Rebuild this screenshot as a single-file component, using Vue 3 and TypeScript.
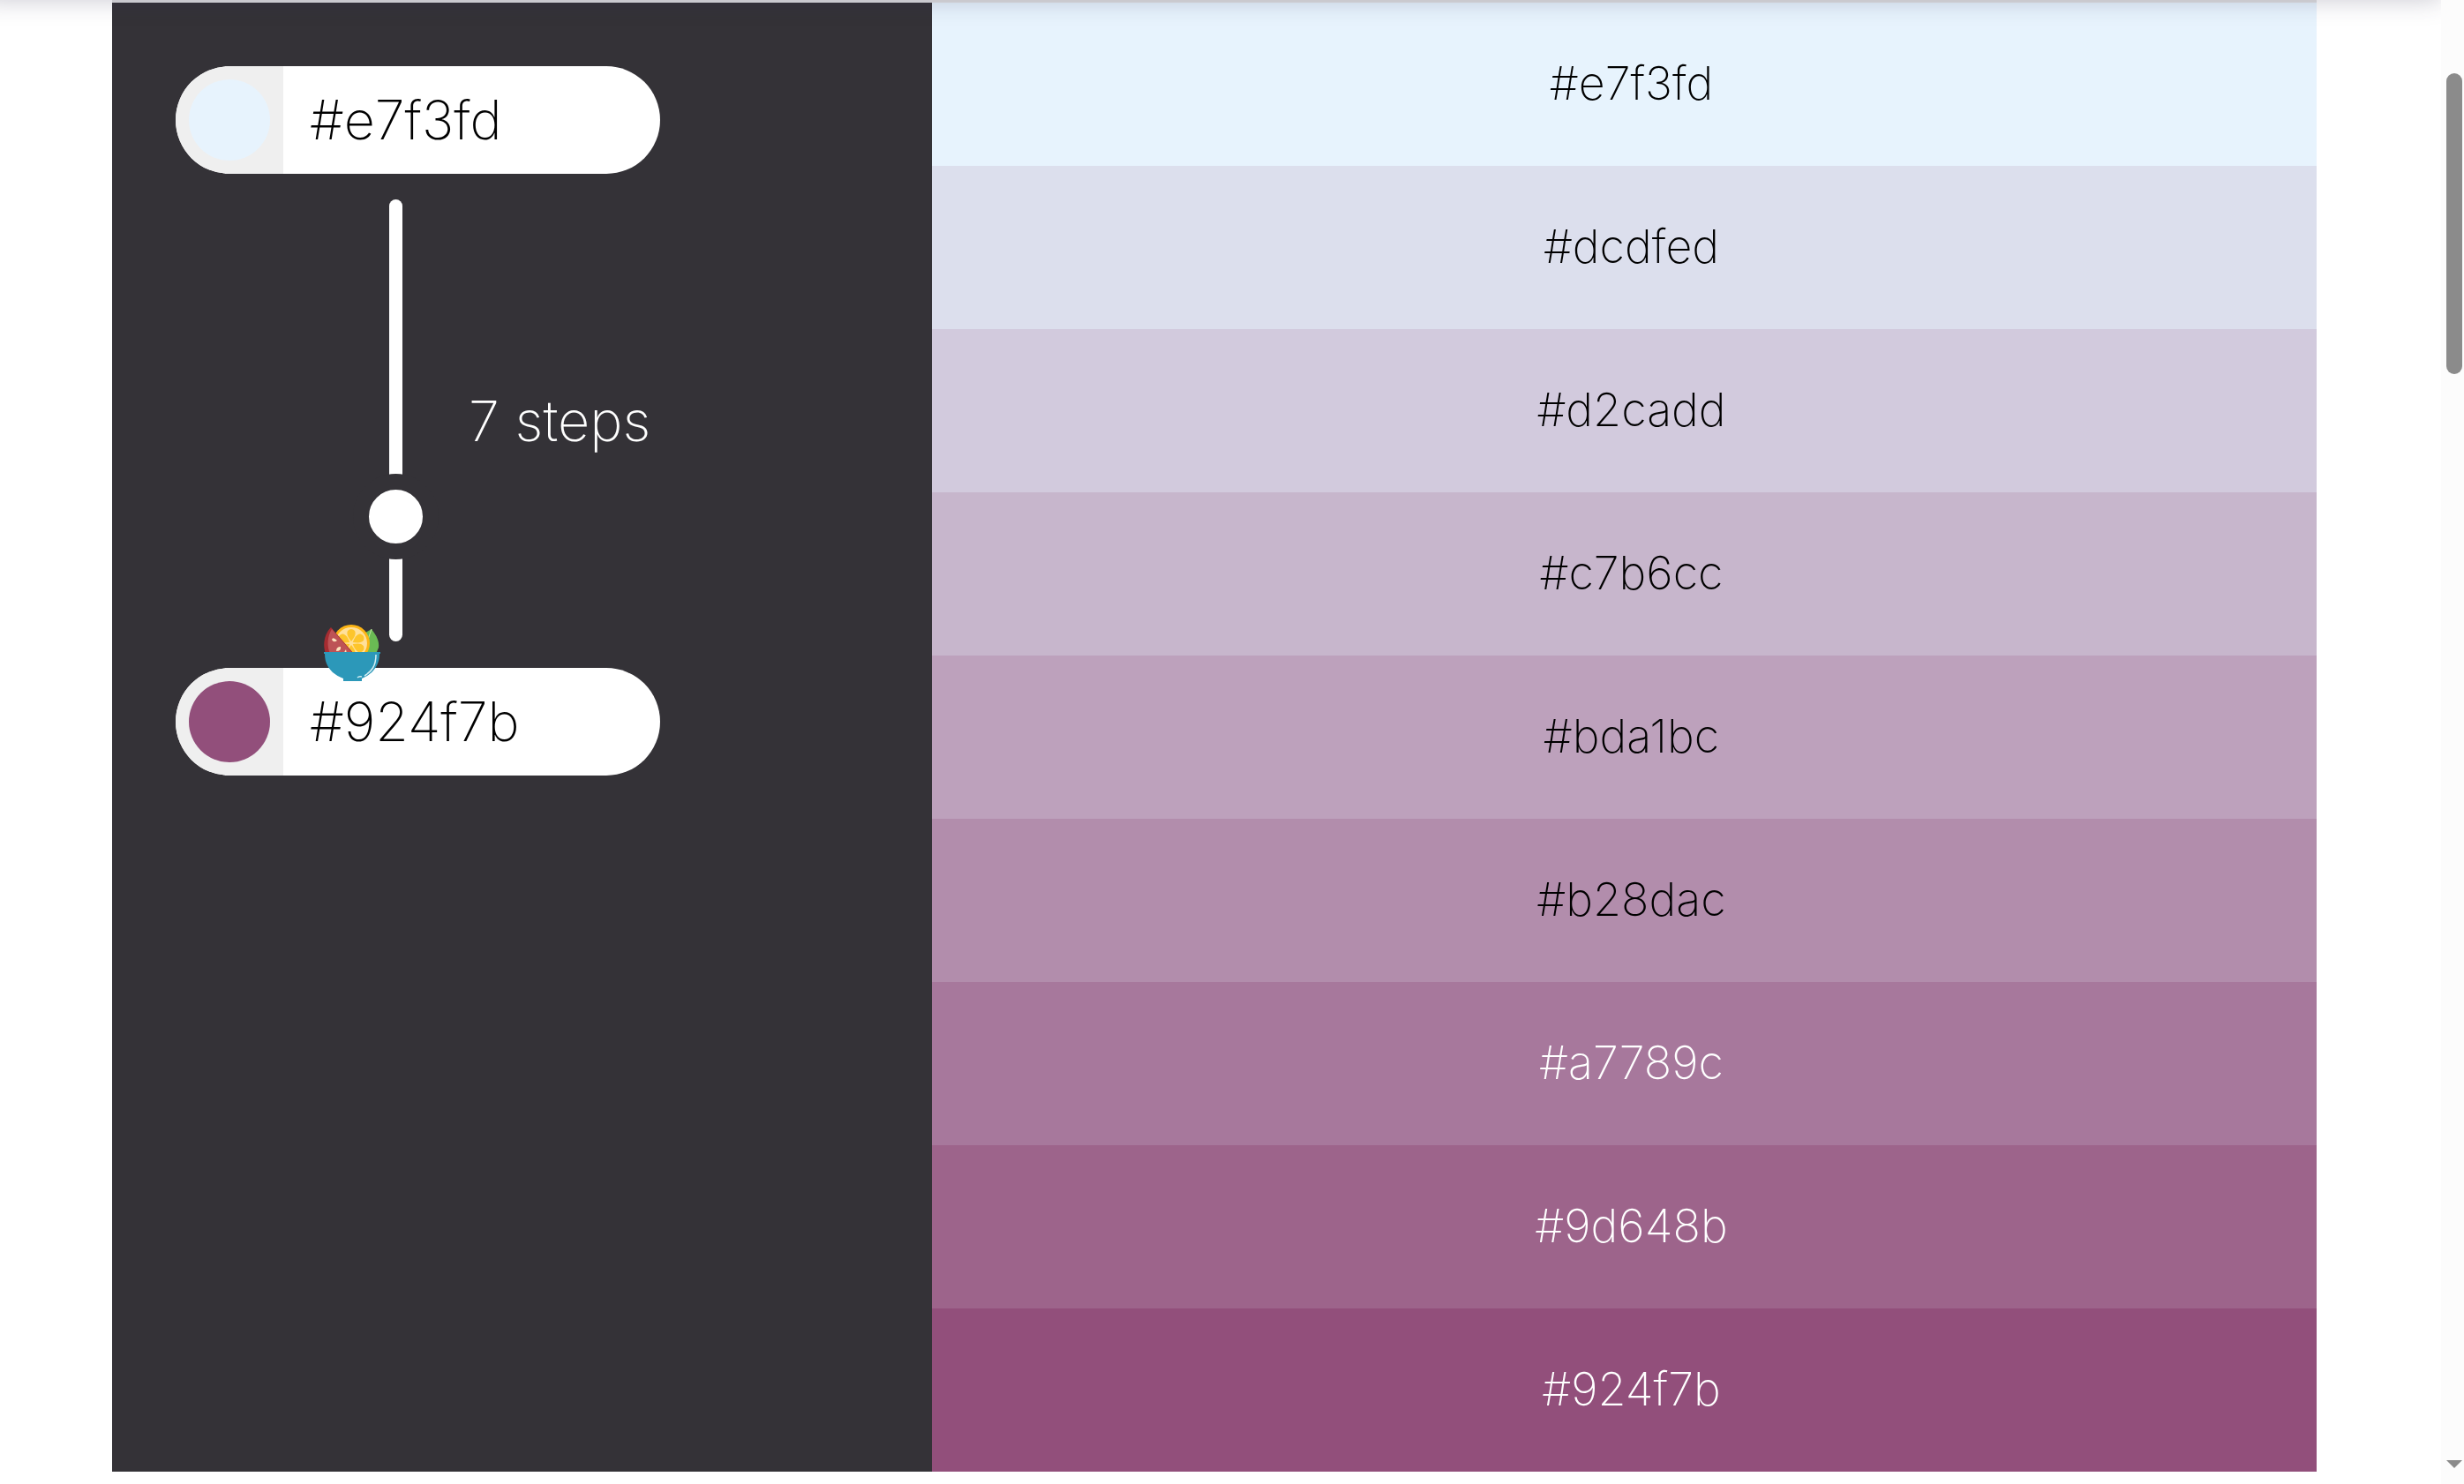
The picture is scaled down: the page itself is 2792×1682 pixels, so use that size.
<script setup lang="ts">
import { computed, ref } from 'vue'

const start = ref('#e7f3fd')
const end = ref('#924f7b')
const steps = ref(7)

function channels(hex: string): number[] {
  return [1, 3, 5].map((i) => parseInt(hex.slice(i, i + 2), 16))
}

const valid = (hex: string) => /^#[0-9a-f]{6}$/i.test(hex)

const shades = computed(() => {
  if (!valid(start.value) || !valid(end.value)) return []
  const a = channels(start.value)
  const b = channels(end.value)
  const count = Number(steps.value) + 1
  return Array.from({ length: count + 1 }, (_, i) => {
    const rgb = a.map((v, c) => Math.round(v + ((b[c] - v) * i) / count))
    const luma = (rgb[0] * 299 + rgb[1] * 587 + rgb[2] * 114) / 1000
    return {
      hex: '#' + rgb.map((v) => v.toString(16).padStart(2, '0')).join(''),
      light: luma < 145,
    }
  })
})
</script>

<template>
  <div class="window">
    <div class="page">
      <main class="mixer">
        <section class="controls">
          <div class="field">
            <input v-model="start" class="swatch" type="color" aria-label="Start color" />
            <input v-model="start" class="hex" type="text" aria-label="Start color hex" />
          </div>
          <div class="stepper">
            <input id="steps" v-model="steps" class="slider" type="range" min="1" max="27" />
            <label for="steps" class="count">{{ steps }} steps</label>
          </div>
          <div class="field">
            <input v-model="end" class="swatch" type="color" aria-label="End color" />
            <input v-model="end" class="hex" type="text" aria-label="End color hex" />
            <svg class="bowl" viewBox="0 0 64 64" aria-hidden="true">
              <path d="M54 5c6 8 9 14 8 21l-3 7H42V12z" fill="#6abb54" />
              <path d="M54 5c-3 8-5 15-7 25" fill="none" stroke="#c6e5a5" stroke-width="1" />
              <circle cx="31" cy="21" r="21" fill="#fdb515" />
              <circle cx="31" cy="21" r="18" fill="#ffe09a" />
              <g fill="#fdc52c">
                <path v-for="a in 6" :key="a" d="M31 19C28 15 25 11 27 7q4-4 8 0c2 4-1 8-4 12z" :transform="`rotate(${a * 60} 31 21)`" />
              </g>
              <path d="M8 3C1 10-2 22 2 33h32z" fill="#a52c31" />
              <path d="M9 5C4 13 3 24 7 33h26z" fill="#bd5356" />
              <g fill="#fce3bd">
                <path d="M9 17q1-4 6 1-4 3-6-1zM14 30q0-5 5-5 1 5-5 5zM22 33l3-5 1 5z" />
              </g>
              <path d="M0 31h64v2h-1C63 47 55 56 43 61v3H22v-3C9 56 1 47 1 33H0z" fill="#2c98b9" />
              <path d="M59 34c0 13-5 19-13 24M43 59q-3-1-5 1" fill="none" stroke="#d5eef3" stroke-width="1.5" />
            </svg>
          </div>
        </section>
        <ol class="shades">
          <li
            v-for="shade in shades"
            :key="shade.hex"
            :class="['shade', { light: shade.light }]"
            :style="{ backgroundColor: shade.hex }"
          >
            {{ shade.hex }}
          </li>
        </ol>
      </main>
      <div class="header-shadow"></div>
    </div>
    <div class="scrollbar" aria-hidden="true">
      <div class="thumb"></div>
      <div class="arrow"></div>
    </div>
  </div>
</template>

<style>
body {
  margin: 0;
  background: #fff;
}
</style>

<style scoped>
.window {
  display: flex;
  min-height: 100vh;
  overflow: hidden;
  font-family: Inter, 'Liberation Sans', sans-serif;
  font-weight: 200;
}

.page {
  position: relative;
  flex: 1;
  overflow: hidden;
  padding: 0 141px 0 127px;
}

.mixer {
  display: grid;
  grid-template-columns: 929fr 1569fr;
  border-top: 3px solid #e0e0e1;
}

.controls {
  display: flex;
  flex-direction: column;
  align-items: flex-start;
  padding: 72px;
  background: #343237;
}

.field {
  position: relative;
  display: flex;
  width: 549px;
  height: 122px;
  border-radius: 61px;
  background: #fff;
}

.swatch {
  appearance: none;
  box-sizing: border-box;
  width: 122px;
  height: 122px;
  margin: 0;
  padding: 15px;
  border: 0;
  border-radius: 61px 0 0 61px;
  background: #efefef;
}

.swatch::-webkit-color-swatch-wrapper {
  padding: 0;
}

.swatch::-webkit-color-swatch {
  border: 0;
  border-radius: 50%;
}

.hex {
  flex: 1;
  min-width: 0;
  padding: 0 30px;
  border: 0;
  border-radius: 0 61px 61px 0;
  background: none;
  color: #000;
  font: inherit;
  font-size: 61px;
}

.stepper {
  display: flex;
  align-items: center;
  width: 100%;
  height: 501px;
  margin: 29px 0 30px;
}

.slider {
  appearance: none;
  writing-mode: vertical-lr;
  direction: rtl;
  width: 97px;
  height: 501px;
  margin: 0 0 0 201px;
  background: none;
}

.slider::-webkit-slider-runnable-track {
  width: 15px;
  height: 100%;
  border-radius: 8px;
  background: #fff;
}

.slider::-webkit-slider-thumb {
  appearance: none;
  box-sizing: border-box;
  width: 97px;
  height: 97px;
  margin-left: -41px;
  border: 18px solid #343237;
  border-radius: 50%;
  background: #fff;
}

.count {
  margin: 0 0 0 34px;
  color: #fff;
  font-size: 63px;
}

.bowl {
  position: absolute;
  top: -49px;
  left: 168px;
  width: 64px;
  height: 64px;
}

.shades {
  margin: 0;
  padding: 0;
  list-style: none;
}

.shade {
  height: 185px;
  padding-left: 16px;
  color: #000;
  font-size: 52px;
  line-height: 184px;
  text-align: center;
}

.shade.light {
  color: #fff;
}

.header-shadow {
  position: absolute;
  top: -40px;
  left: -20px;
  right: 0;
  height: 40px;
  box-shadow: 0 0 28px rgba(50, 45, 80, 0.26);
}

.scrollbar {
  display: flex;
  flex-direction: column;
  justify-content: space-between;
  align-items: center;
  box-sizing: border-box;
  width: 26px;
  padding: 83px 0 18px 4px;
  background: #fcfcfc;
}

.thumb {
  width: 18px;
  height: 341px;
  border-radius: 9px;
  background: #8b8b8b;
}

.arrow {
  width: 18px;
  height: 9px;
  background: #8b8b8b;
  clip-path: polygon(0 0, 100% 0, 50% 100%);
}
</style>
